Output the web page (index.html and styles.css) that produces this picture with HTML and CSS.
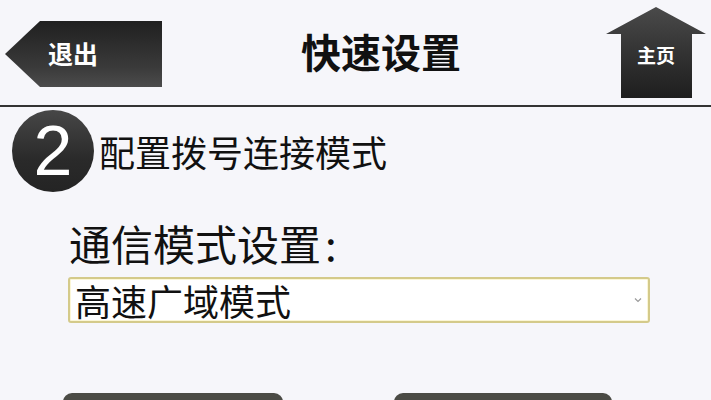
FILE: index.html
```html
<!DOCTYPE html>
<html lang="zh-CN">
<head>
<meta charset="utf-8">
<title>快速设置</title>
<link rel="stylesheet" href="styles.css">
</head>
<body>
<header class="topbar">
  <a class="btn-back" href="#">退出</a>
  <h1 class="title">快速设置</h1>
  <a class="btn-home" href="#">主页</a>
</header>
<main class="content">
  <div class="step">
    <div class="step-num">2</div>
    <div class="step-text">配置拨号连接模式</div>
  </div>
  <div class="form-group">
    <div class="label">通信模式设置<span class="colon">:</span></div>
    <div class="select">
      <span class="select-value">高速广域模式</span>
      <svg class="chevron" width="8" height="6" viewBox="0 0 8 6"><path d="M1 1.5 L4 4.5 L7 1.5" fill="none" stroke="#9a9a9a" stroke-width="1.2"/></svg>
    </div>
  </div>
  <div class="actions">
    <div class="action left"></div>
    <div class="action right"></div>
  </div>
</main>
</body>
</html>
```
FILE: styles.css
```css
html, body {
  margin: 0;
  padding: 0;
}
body {
  width: 711px;
  height: 400px;
  overflow: hidden;
  background: #f6f6fa;
  font-family: "Noto Sans CJK SC", "Noto Sans", sans-serif;
  color: #111;
}
.topbar {
  display: flex;
  align-items: flex-start;
  height: 105px;
  padding: 0 5px;
  border-bottom: 2px solid #333;
}
.btn-back {
  display: block;
  margin-top: 21px;
  width: 157px;
  height: 66px;
  box-sizing: border-box;
  padding-left: 43px;
  line-height: 64px;
  font-size: 25px;
  font-weight: 700;
  color: #fff;
  text-decoration: none;
  background: linear-gradient(#202020, #3a3a3a 70%, #4c4c4c);
  clip-path: polygon(35px 0, 100% 0, 100% 100%, 35px 100%, 0 50%);
}
.title {
  flex: 1;
  margin: 29px 0 0;
  padding-right: 6px;
  text-align: center;
  font-size: 40px;
  line-height: 44px;
  font-weight: 700;
  color: #111;
}
.btn-home {
  display: block;
  margin-top: 7px;
  width: 100px;
  height: 91px;
  box-sizing: border-box;
  padding-top: 36px;
  line-height: 24px;
  text-align: center;
  font-size: 19px;
  font-weight: 700;
  color: #fff;
  text-decoration: none;
  background: linear-gradient(#4a4a4a, #333 50%, #1e1e1e);
  clip-path: polygon(50% 0, 100% 27px, 86px 27px, 86px 100%, 15px 100%, 15px 27px, 0 27px);
}
.content {
  display: flex;
  flex-direction: column;
}
.step {
  display: flex;
  align-items: center;
  margin: 3px 0 0 12px;
  gap: 5px;
}
.step-num {
  width: 82px;
  height: 82px;
  border-radius: 50%;
  background: linear-gradient(#474747, #2a2a2a 60%, #242424);
  color: #fff;
  font-family: "Liberation Sans", Arial, sans-serif;
  font-size: 70px;
  line-height: 82px;
  text-align: center;
}
.step-text {
  font-size: 36px;
  line-height: 44px;
}
.form-group {
  display: flex;
  flex-direction: column;
  margin: 28px 61px 0 69px;
}
.label {
  font-size: 42px;
  line-height: 46px;
}
.colon {
  margin-left: 4px;
}
.select {
  display: flex;
  align-items: center;
  justify-content: space-between;
  margin: 11px 0 0 -1px;
  height: 46px;
  box-sizing: border-box;
  padding: 0 6px 0 5px;
  background: #fff;
  border: 2px solid #d4ca8a;
  border-radius: 3px;
  box-shadow: inset 0 0 0 1px #fbf6d6;
}
.select-value {
  font-size: 36px;
  line-height: 42px;
}
.chevron {
  display: block;
}
.actions {
  display: flex;
  margin: 70px 0 0 63px;
  gap: 111px;
}
.action {
  height: 30px;
  background: #4b4b45;
  border-radius: 9px 9px 0 0;
}
.action.left { width: 220px; }
.action.right { width: 218px; }
```
